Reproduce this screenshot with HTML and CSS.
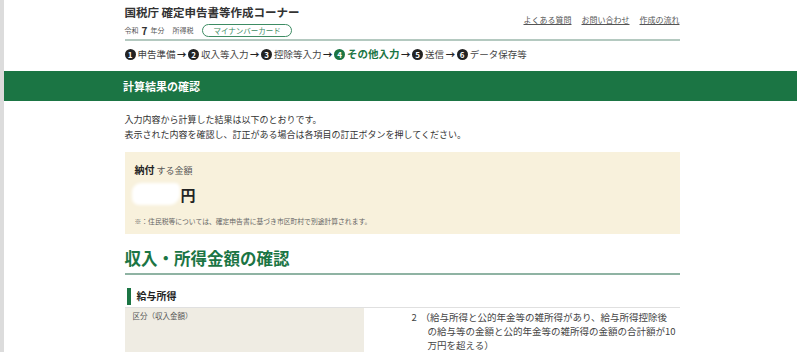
FILE: index.html
```html
<!DOCTYPE html>
<html lang="ja">
<head>
  <meta charset="UTF-8" />
  <title>確定申告書等作成コーナー - 計算結果の確認</title>
  <link rel="stylesheet" href="styles.css">
</head>
<body>

  <header class="header">
    <div class="header-inner">
      <div class="brand">
        <div class="site-title">国税庁 確定申告書等作成コーナー</div>
        <div class="site-meta">
          <span>令和</span> <span class="year">7</span> <span>年分</span>
          <span class="tax">所得税</span>
          <span class="badge">マイナンバーカード</span>
        </div>
      </div>
      <nav class="links">
        <a href="#">よくある質問</a>
        <a href="#">お問い合わせ</a>
        <a href="#">作成の流れ</a>
      </nav>
    </div>
    <ol class="steps">
      <li><span class="num">1</span>申告準備</li>
      <li class="arrow">→</li>
      <li><span class="num">2</span>収入等入力</li>
      <li class="arrow">→</li>
      <li><span class="num">3</span>控除等入力</li>
      <li class="arrow">→</li>
      <li class="current"><span class="num">4</span>その他入力</li>
      <li class="arrow">→</li>
      <li><span class="num">5</span>送信</li>
      <li class="arrow">→</li>
      <li><span class="num">6</span>データ保存等</li>
    </ol>
  </header>

  <div class="page-bar">
    <h1>計算結果の確認</h1>
  </div>

  <main class="container">
    <p class="lead">
      入力内容から計算した結果は以下のとおりです。<br>
      表示された内容を確認し、訂正がある場合は各項目の訂正ボタンを押してください。
    </p>

    <div class="result-box">
      <div class="result-label"><strong>納付</strong> する金額</div>
      <div class="result-amount"><span class="hidden-num"></span>円</div>
      <div class="result-note">※：住民税等については、確定申告書に基づき市区町村で別途計算されます。</div>
    </div>

    <h2 class="section-title">収入・所得金額の確認</h2>

    <h3 class="sub-title">給与所得</h3>
    <table class="detail">
      <tr>
        <th>区分（収入金額）</th>
        <td>
          <div class="value">
            <span class="code">2</span>
            <span class="desc">（給与所得と公的年金等の雑所得があり、給与所得控除後<br>の給与等の金額と公的年金等の雑所得の金額の合計額が10<br>万円を超える）</span>
          </div>
        </td>
      </tr>
    </table>
  </main>

</body>
</html>
```

FILE: styles.css
```css
body {
  margin: 0;
  padding: 0;
  border-left: 4px solid #dcdcdc;
  background-color: #ffffff;
  font-family: "Noto Sans CJK JP", "Noto Sans", sans-serif;
  color: #333;
  min-height: 352px;
}

.header,
.container {
  width: 555px;
  margin: 0 auto;
}

.header-inner {
  display: flex;
  justify-content: space-between;
  align-items: flex-start;
  padding-top: 3px;
  padding-bottom: 2px;
  border-bottom: 2px solid #b4c9c0;
}

.site-title {
  font-size: 11.5px;
  font-weight: bold;
  line-height: 18px;
  color: #333;
}

.site-meta {
  display: flex;
  align-items: center;
  gap: 3px;
  margin-top: 2px;
  font-size: 7px;
  color: #555;
  height: 14px;
}

.site-meta .year {
  font-size: 10px;
  font-weight: bold;
  color: #333;
}

.site-meta .tax {
  margin-left: 5px;
}

.badge {
  margin-left: 6px;
  padding: 0 10px;
  border: 1px solid #3d8c63;
  border-radius: 8px;
  font-size: 7.5px;
  line-height: 11px;
  color: #3d8c63;
}

.links {
  display: flex;
  gap: 10px;
  margin-top: 11px;
}

.links a {
  font-size: 8px;
  color: #555;
  text-decoration: underline;
}

.steps {
  display: flex;
  align-items: center;
  list-style: none;
  margin: 0;
  padding: 5px 0 9px;
  font-size: 9.5px;
  color: #444;
  line-height: 16px;
}

.steps li {
  display: flex;
  align-items: center;
}

.steps .num {
  display: inline-block;
  width: 11px;
  height: 11px;
  border-radius: 50%;
  background-color: #222;
  color: #fff;
  font-size: 8px;
  font-weight: bold;
  line-height: 11px;
  text-align: center;
  margin-right: 2px;
}

.steps .arrow {
  font-weight: bold;
  color: #222;
  margin: 0 1.5px;
}

.steps .current {
  color: #1b7544;
  font-weight: bold;
  font-size: 10.5px;
}

.steps .current .num {
  background-color: #1b7544;
}

.page-bar {
  background-color: #1b7544;
  height: 30px;
  margin-right: 3px;
  display: flex;
  align-items: center;
}

.page-bar h1 {
  width: 555px;
  margin: 0 auto;
  font-size: 11px;
  color: #fff;
  font-weight: bold;
}

.lead {
  margin: 11px 0 0;
  font-size: 9px;
  line-height: 15px;
  color: #333;
}

.result-box {
  background-color: #f8f1dc;
  margin-top: 10px;
  padding: 10px 10px 8px;
}

.result-label {
  font-size: 9px;
  color: #555;
}

.result-label strong {
  font-size: 10px;
  color: #222;
}

.result-amount {
  display: flex;
  align-items: center;
  margin-top: 6px;
  font-size: 15px;
  font-weight: bold;
  color: #222;
}

.hidden-num {
  display: inline-block;
  width: 48px;
  height: 22px;
  margin-left: -3px;
  margin-right: 1px;
  background-color: #ffffff;
  border-radius: 9px 5px 11px 7px;
  filter: blur(1.5px);
}

.result-note {
  margin-top: 11px;
  font-size: 6.8px;
  color: #666;
}

.section-title {
  margin: 12px 0 0;
  padding-bottom: 3px;
  border-bottom: 2px solid #8fb3a3;
  font-size: 16.5px;
  color: #1b7544;
  font-weight: bold;
}

.sub-title {
  margin: 13px 0 0 2px;
  padding: 0 0 2px 6px;
  border-left: 4px solid #1b7544;
  font-size: 10px;
  line-height: 15px;
  color: #222;
}

.detail {
  width: 100%;
  table-layout: fixed;
  margin-top: 2px;
  border-collapse: collapse;
  border-top: 1px solid #e0e0e0;
}

.detail th {
  width: 223px;
  background-color: #efece3;
  text-align: left;
  vertical-align: top;
  font-weight: normal;
  font-size: 7.5px;
  color: #555;
  padding: 2px 8px;
  height: 60px;
}

.detail td {
  vertical-align: top;
  padding: 2px 0 0 48px;
}

.value {
  display: flex;
  font-size: 9.5px;
  line-height: 14px;
  color: #444;
}

.value .code {
  width: 9px;
  flex: none;
}

.value .desc {
  padding-left: 7px;
  text-indent: -7px;
  white-space: nowrap;
}
```
